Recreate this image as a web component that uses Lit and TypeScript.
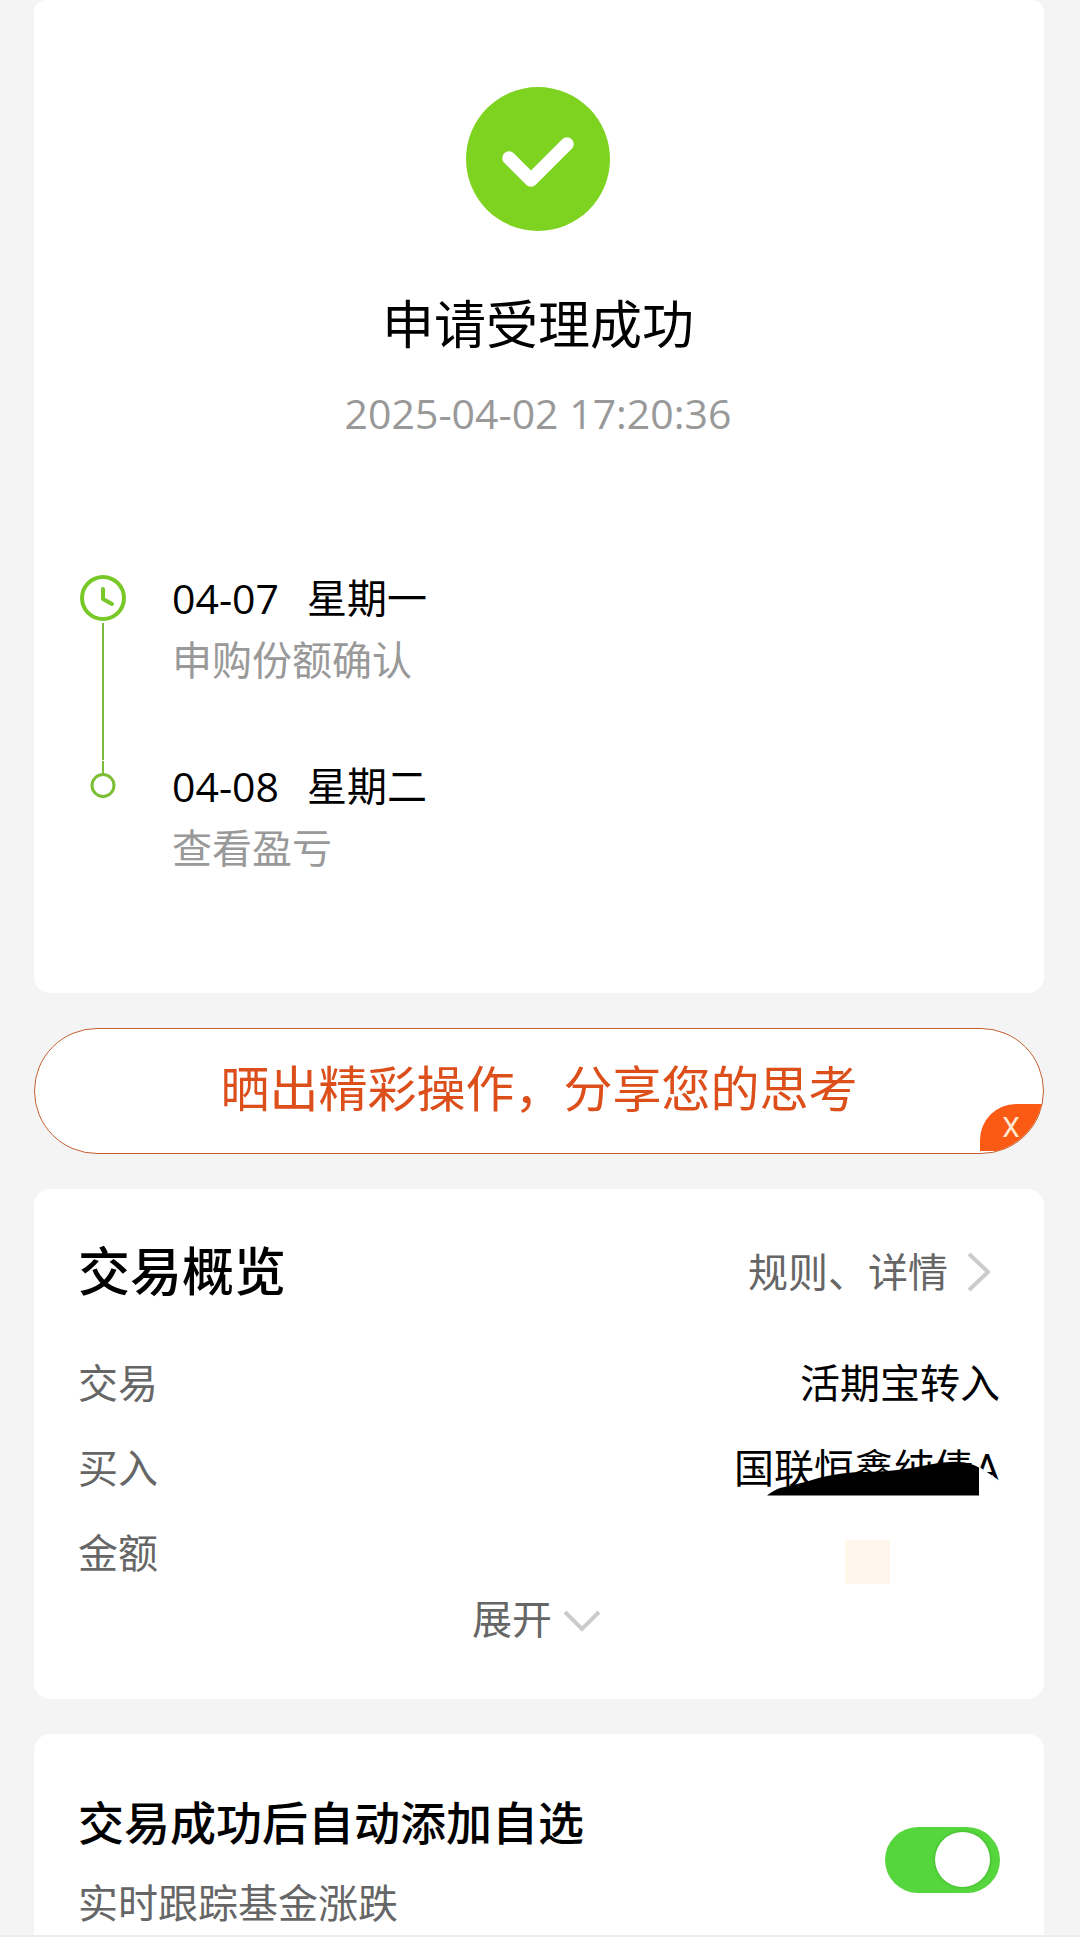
import { LitElement, html, css } from "lit";
import { customElement, state } from "lit/decorators.js";

@customElement("app-root")
export class AppRoot extends LitElement {
  @state() private shareVisible = true;
  @state() private autoAdd = true;

  static styles = css`
    :host {
      display: flex;
      flex-direction: column;
      min-height: 100vh;
      background: #f4f4f4;
      color: #000;
      font-family: Roboto, "Noto Sans CJK SC", sans-serif;
      font-size: 40px;
      line-height: 50px;
    }
    * {
      box-sizing: border-box;
    }
    h1,
    h2,
    p,
    ol,
    dl,
    dd {
      margin: 0;
      padding: 0;
      font-weight: 400;
    }
    a {
      color: inherit;
      text-decoration: none;
    }
    button {
      border: 0;
      padding: 0;
      background: none;
      font: inherit;
      color: inherit;
      cursor: pointer;
    }
    svg {
      display: block;
      flex: none;
    }
    main {
      flex: 1;
      display: flex;
      flex-direction: column;
      gap: 35px;
      padding: 0 36px 0 34px;
    }
    .card {
      background: #fff;
      border-radius: 16px;
      padding: 55px 44px 53px 44px;
    }
    .result,
    .auto {
      font-family: "Open Sans", "Noto Sans CJK SC", sans-serif;
    }
    .result {
      border-radius: 12px 12px 16px 16px;
      padding: 87px 46px 120px 44px;
    }
    .status {
      display: flex;
      flex-direction: column;
      align-items: center;
    }
    .status h1 {
      margin-top: 63px;
      font-size: 52px;
      line-height: 60px;
    }
    .status time {
      margin-top: 34px;
      font-size: 41px;
      color: #999;
    }
    .timeline {
      list-style: none;
      margin-top: 135px;
    }
    .step {
      display: flex;
      gap: 44px;
    }
    .marker {
      display: flex;
      flex-direction: column;
      align-items: center;
      width: 50px;
    }
    .line {
      flex: 1;
      width: 2px;
      margin-bottom: 1px;
      background: #7dba3c;
    }
    .step-text {
      display: flex;
      flex-direction: column;
      gap: 12px;
    }
    .step:not(:last-child) .step-text {
      padding-bottom: 76px;
    }
    .day {
      display: flex;
      gap: 28px;
    }
    .day time {
      font-size: 41px;
    }
    .note {
      color: #999;
    }
    .share {
      position: relative;
      overflow: hidden;
      border: 1px solid #c4602f;
      border-radius: 63px;
      background: #fff;
      text-align: center;
      color: #dc4f1b;
      font-size: 49px;
      line-height: 124px;
    }
    .share a {
      display: block;
    }
    .close {
      position: absolute;
      right: 1px;
      bottom: 2px;
      width: 62px;
      height: 47px;
      border-radius: 36px 0 0 0;
      background: #fa5a14;
      color: #ffe9d2;
      font-size: 28px;
      line-height: 47px;
    }
    .head {
      display: flex;
      justify-content: space-between;
      align-items: center;
    }
    .head h2 {
      font-size: 52px;
      line-height: 60px;
      font-weight: 500;
    }
    .more {
      display: flex;
      align-items: center;
      gap: 18px;
      padding-right: 8px;
      color: #666;
    }
    .facts {
      display: flex;
      flex-direction: column;
      gap: 35px;
      margin-top: 56px;
    }
    .fact {
      display: flex;
      justify-content: space-between;
    }
    .fact dt {
      color: #666;
    }
    .masked {
      position: relative;
    }
    .masked svg {
      position: absolute;
      right: -3px;
      top: 13px;
    }
    .blank {
      width: 45px;
      height: 44px;
      margin: 10px 110px 0 0;
      background: #fff7ec;
    }
    .expand {
      display: flex;
      align-items: center;
      gap: 10px;
      margin: 12px auto 0;
      color: #666;
    }
    .auto {
      flex: 1;
      display: flex;
      justify-content: space-between;
      align-items: center;
      border-radius: 16px 16px 0 0;
      padding-bottom: 5px;
    }
    .auto label {
      display: block;
      margin-bottom: 26px;
      font-size: 46px;
      line-height: 60px;
      font-weight: 500;
    }
    .auto p {
      color: #666;
    }
    .switch {
      appearance: none;
      flex: none;
      display: flex;
      align-items: center;
      width: 115px;
      height: 66px;
      margin: 0;
      padding: 0 10px;
      border-radius: 33px;
      background: #ccc;
      cursor: pointer;
    }
    .switch::before {
      content: "";
      width: 55px;
      height: 55px;
      border-radius: 50%;
      background: #fff;
      box-shadow: 0 0 3px rgba(0, 80, 0, 0.4);
    }
    .switch:checked {
      justify-content: flex-end;
      background: #55d63c;
    }
    footer {
      height: 18px;
      border-top: 2px solid #ededed;
      background: #fff;
    }
  `;

  private step(date: string, day: string, note: string, marker: unknown) {
    return html`<li class="step">
      <div class="marker">${marker}</div>
      <div class="step-text">
        <div class="day"><time>${date}</time><span>${day}</span></div>
        <p class="note">${note}</p>
      </div>
    </li>`;
  }

  render() {
    const clock = html`<svg width="50" height="50" viewBox="0 0 50 50" fill="none" stroke="#78c828" aria-hidden="true">
        <circle cx="25" cy="25" r="21" stroke-width="4" />
        <path d="M25 16V26L34 31" stroke-width="4" stroke-linecap="round" stroke-linejoin="round" />
      </svg>
      <span class="line"></span>`;
    const dot = html`<svg width="50" height="50" viewBox="0 0 50 50" fill="none" stroke="#7cbf35" aria-hidden="true">
      <path d="M25 0V13" stroke-width="2" />
      <circle cx="25" cy="24.500" r="11" stroke-width="3" />
    </svg>`;

    return html`
      <main lang="zh-CN">
        <section class="card result">
          <div class="status">
            <svg width="144" height="144" viewBox="0 0 144 144" aria-hidden="true">
              <circle cx="72" cy="72" r="72" fill="#7ed321" />
              <path d="M43 71L65 93L101 57" fill="none" stroke="#fff" stroke-width="13.500" stroke-linecap="round" stroke-linejoin="round" />
            </svg>
            <h1>申请受理成功</h1>
            <time datetime="2025-04-02T17:20:36">2025-04-02 17:20:36</time>
          </div>
          <ol class="timeline">
            ${this.step("04-07", "星期一", "申购份额确认", clock)}
            ${this.step("04-08", "星期二", "查看盈亏", dot)}
          </ol>
        </section>

        ${this.shareVisible
          ? html`<div class="share">
              <a href="#share">晒出精彩操作，分享您的思考</a>
              <button class="close" @click=${() => (this.shareVisible = false)}>X</button>
            </div>`
          : null}

        <section class="card">
          <div class="head">
            <h2>交易概览</h2>
            <a class="more" href="#detail">
              规则、详情
              <svg width="26" height="44" viewBox="0 0 26 44" fill="none" stroke="#ccc" stroke-width="4" aria-hidden="true">
                <path d="M3 2L22 20L3 38" />
              </svg>
            </a>
          </div>
          <dl class="facts">
            <div class="fact"><dt>交易</dt><dd>活期宝转入</dd></div>
            <div class="fact">
              <dt>买入</dt>
              <dd class="masked">
                国联恒鑫纯债A
                <svg width="236" height="40" viewBox="0 0 236 40" aria-hidden="true">
                  <path d="M211 8L233 23L236 40H211Z" fill="#fff" />
                  <path d="M0 37.500Q7 32 13 30Q26 27 40 23.500Q50 20 60 18Q75 15 90 14Q112 14 130 12Q147 10 163 6.500Q173 4 183 4Q191 3.500 198 4.500Q205 6 212 9.500V37.500Z" fill="#000" />
                </svg>
              </dd>
            </div>
            <div class="fact"><dt>金额</dt><dd class="blank"></dd></div>
          </dl>
          <button class="expand">
            展开
            <svg width="44" height="24" viewBox="0 0 44 24" fill="none" stroke="#ccc" stroke-width="4" aria-hidden="true">
              <path d="M3 3L20 20L37 3" />
            </svg>
          </button>
        </section>

        <section class="card auto">
          <div>
            <label for="auto-add">交易成功后自动添加自选</label>
            <p>实时跟踪基金涨跌</p>
          </div>
          <input
            id="auto-add"
            class="switch"
            type="checkbox"
            role="switch"
            .checked=${this.autoAdd}
            @change=${(e: Event) => (this.autoAdd = (e.target as HTMLInputElement).checked)}
          />
        </section>
      </main>
      <footer></footer>
    `;
  }
}
